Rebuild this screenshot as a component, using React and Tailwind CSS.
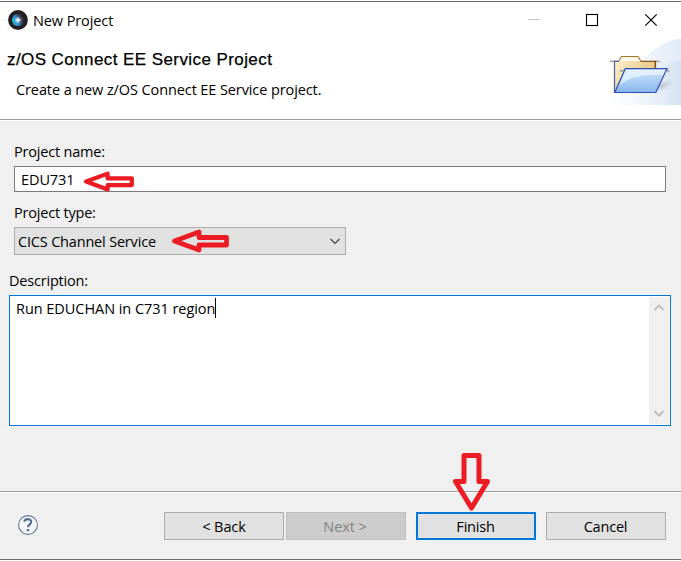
import React from "react";

const redArrow = {
  fill: "none",
  stroke: "#ed1c24",
  strokeLinejoin: "round",
};

function AppIcon() {
  return (
    <svg className="block h-5 w-5" viewBox="0 0 20 20">
      <defs>
        <linearGradient id="globe" x1="0" x2="1" y1="0.7" y2="0.3">
          <stop offset="0" stopColor="#1fc8c8" />
          <stop offset="0.45" stopColor="#2b86dc" />
          <stop offset="0.6" stopColor="#3f5068" />
          <stop offset="1" stopColor="#26262c" />
        </linearGradient>
        <radialGradient id="flare">
          <stop offset="0" stopColor="#fff" />
          <stop offset="0.5" stopColor="#dcecff" stopOpacity="0.55" />
          <stop offset="1" stopColor="#fff" stopOpacity="0" />
        </radialGradient>
      </defs>
      <circle cx="10" cy="10" r="9.9" fill="#231f20" />
      <circle cx="10" cy="10" r="6" fill="url(#globe)" />
      <circle cx="10" cy="10" r="3.6" fill="url(#flare)" />
      <path d="M10 6L10.500 9.500L14 10L10.500 10.500L10 14L9.500 10.500L6 10L9.500 9.500Z" fill="#fff" />
    </svg>
  );
}

function FolderBanner() {
  return (
    <svg className="block h-[67px] w-[73px]" viewBox="608 38 73 67">
      <defs>
        <linearGradient id="swoosh" x1="0" x2="1" y1="0" y2="0">
          <stop offset="0" stopColor="#fff" />
          <stop offset="1" stopColor="#e3ebf7" />
        </linearGradient>
        <linearGradient id="swoosh2" x1="0" x2="1" y1="0" y2="0">
          <stop offset="0" stopColor="#f4f7fc" stopOpacity="0" />
          <stop offset="1" stopColor="#d5e2f3" />
        </linearGradient>
        <linearGradient id="back" x1="0" x2="1" y1="0" y2="0.7">
          <stop offset="0" stopColor="#fff3d4" />
          <stop offset="1" stopColor="#e5bf6f" />
        </linearGradient>
        <linearGradient id="front" x1="0" x2="0" y1="0" y2="1">
          <stop offset="0" stopColor="#d3e8fc" />
          <stop offset="1" stopColor="#87b6ec" />
        </linearGradient>
        <radialGradient id="shade">
          <stop offset="0" stopColor="#a9adb9" stopOpacity="0.7" />
          <stop offset="1" stopColor="#c9d0df" stopOpacity="0" />
        </radialGradient>
      </defs>
      <path d="M608 105C626 86 643 43 681 38.500V105Z" fill="url(#swoosh)" />
      <path d="M630 105C646 82 660 61 681 61V105Z" fill="url(#swoosh2)" />
      <ellipse cx="662" cy="86" rx="14" ry="5.500" fill="url(#shade)" transform="rotate(-22 662 86)" />
      <path d="M610.500 62.500V61.300H618M654 61.300H659V62.500" fill="none" stroke="#aaa" strokeWidth="1.600" />
      <path d="M614.500 61.500H618.500L621.500 56.500H638L641 61.500H655V91.500H614.500Z" fill="url(#back)" stroke="#a8782e" strokeWidth="1.100" />
      <path d="M619.500 61L622.200 57.300H637.300L640 61Z" fill="#fffaf0" />
      <path d="M641 61.300H655.500V69" fill="none" stroke="#87551b" strokeWidth="1.300" />
      <path d="M618.500 61.300H614.500V92" fill="none" stroke="#5563ad" strokeWidth="1.200" />
      <path d="M621 72V70.500H626M667 69.500L669 72" fill="none" stroke="#999ea8" strokeWidth="1.600" />
      <path d="M625.300 68.700H667L655.800 92.500H614.700Z" fill="url(#front)" />
      <path d="M626 69.500H665.500L663 75C641 74 624 79 618.500 87Z" fill="#f0f8ff" fillOpacity="0.7" />
      <path d="M625.300 68.700H667L655.800 92.500H614.700Z" fill="none" stroke="#2e50b4" strokeWidth="1.200" />
    </svg>
  );
}

function LeftArrow() {
  return (
    <svg className="block h-[24px] w-[60px]" viewBox="0 0 60 24">
      <path d="M3.500 12L28 3V8.500H55.500V16H28V21Z" {...redArrow} strokeWidth="4.800" />
    </svg>
  );
}

function Button({ children, className }) {
  return (
    <button className={`flex h-7 w-[120px] items-center justify-center ${className}`}>
      {children}
    </button>
  );
}

export default function App() {
  return (
    <div className="flex h-[561px] w-[681px] flex-col overflow-hidden bg-white pt-px font-['Open_Sans',sans-serif] text-[14.5px] leading-5 tracking-[-0.1px] whitespace-nowrap text-black">
      <header className="flex h-[118px] shrink-0 flex-col border-t border-[#6b6b6b]">
        <div className="flex h-9 shrink-0 items-center pl-2">
          <AppIcon />
          <span className="ml-[5px] pt-px">New Project</span>
          <svg className="ml-auto block h-9 w-[161px]" viewBox="520 2 161 36" fill="none" stroke="#000">
            <path d="M528 19.500H540" stroke="#c8c8c8" />
            <rect x="586.500" y="14.500" width="11" height="11" strokeWidth="1.100" />
            <path d="M645.300 14.300L656.700 25.700M656.700 14.300L645.300 25.700" strokeWidth="1.200" />
          </svg>
        </div>
        <div className="flex">
          <div className="flex-1">
            <h1 className="mt-[12px] pl-[7px] font-['Liberation_Sans',sans-serif] text-[17px] tracking-[0.42px] [-webkit-text-stroke:0.25px_black]">z/OS Connect EE Service Project</h1>
            <p className="mt-[10px] pl-4">Create a new z/OS Connect EE Service project.</p>
          </div>
          <FolderBanner />
        </div>
      </header>
      <main className="flex h-[372px] shrink-0 flex-col border-t border-[#a0a0a0] bg-[#f0f0f0]">
        <div className="h-px shrink-0 bg-white" />
        <label className="mt-[21px] ml-[14px] tracking-[-0.2px]">Project name:</label>
        <div className="relative mt-1 ml-[14px] flex h-[26px] w-[652px] items-center border border-[#7a7a7a] bg-white pl-[6px]">
          <span className="pt-px">EDU731</span>
          <div className="absolute top-[4px] left-[68px] origin-top-left scale-x-[0.88] scale-y-[0.88]"><LeftArrow /></div>
        </div>
        <label className="mt-[11px] ml-[14px] tracking-[-0.2px]">Project type:</label>
        <div className="relative mt-1 ml-[14px] flex h-7 w-[332px] items-center border border-[#adadad] bg-[#e1e1e1] pl-[3px]">
          <span className="pt-px tracking-[-0.18px]">CICS Channel Service</span>
          <svg className="mr-[4px] ml-auto block h-3 w-3" viewBox="0 0 12 12">
            <path d="M1.500 4L6 8.500L10.500 4" fill="none" stroke="#444" strokeWidth="1.200" />
          </svg>
          <div className="absolute top-[1px] left-[156px]"><LeftArrow /></div>
        </div>
        <label className="mt-4 ml-[9px] tracking-[-0.2px]">Description:</label>
        <div className="mt-1 ml-[9px] flex h-[131px] w-[662px] border border-[#0078d7] bg-white p-px">
          <div className="flex flex-1 items-start pt-px pl-[5px]">
            <span className="pt-px tracking-[-0.05px]">Run EDUCHAN in C731 region</span>
            <span className="h-5 w-px bg-black" />
          </div>
          <div className="flex w-5 flex-col items-center justify-between bg-[#f0f0f0] py-[6px]">
            <svg className="block h-[9px] w-[10px]" viewBox="0 0 10 9"><path d="M0.500 7L5 2.500L9.500 7" fill="none" stroke="#bfbfbf" strokeWidth="2" /></svg>
            <svg className="block h-[9px] w-[10px]" viewBox="0 0 10 9"><path d="M0.500 2L5 6.500L9.500 2" fill="none" stroke="#bfbfbf" strokeWidth="2" /></svg>
          </div>
        </div>
      </main>
      <footer className="relative flex h-[69px] shrink-0 items-start border-y border-t-[#a0a0a0] border-b-[#6b6b6b] bg-[#f0f0f0]">
        <div className="flex h-full w-full items-start border-t border-white pt-[19px] pl-[18px]">
          <svg className="mt-[3px] block h-5 w-5" viewBox="0 0 20 20">
            <circle cx="10" cy="10" r="9.400" fill="#f6f7fa" stroke="#687894" strokeWidth="1.100" />
            <path d="M6.300 6.700C6.600 3.300 13.500 3.200 13.200 7C13 9.600 10 9.700 10 12.300" fill="none" stroke="#566b94" strokeWidth="2.100" />
            <rect x="8.700" y="14" width="2.500" height="2.300" rx="0.500" fill="#566b94" />
          </svg>
          <Button className="ml-[126px] border border-[#adadad] bg-[#e1e1e1] pt-px">&lt; Back</Button>
          <Button className="ml-[2px] border border-[#bfbfbf] bg-[#cccccc] pt-px pr-[2px] text-[#838383]">Next &gt;</Button>
          <Button className="ml-[10px] border-2 border-[#0078d7] bg-[#e1e1e1] pt-px pr-px tracking-[-0.2px]">Finish</Button>
          <Button className="ml-[10px] border border-[#adadad] bg-[#e1e1e1] pt-px pr-px tracking-[-0.2px]">Cancel</Button>
        </div>
        <svg className="absolute -top-[41px] left-[451px] block h-[62px] w-[42px]" viewBox="451 450 42 62">
          <path d="M464 454.500H479V480.500H487.500L471.500 507L455.500 480.500H464Z" {...redArrow} strokeWidth="5" />
        </svg>
      </footer>
    </div>
  );
}
